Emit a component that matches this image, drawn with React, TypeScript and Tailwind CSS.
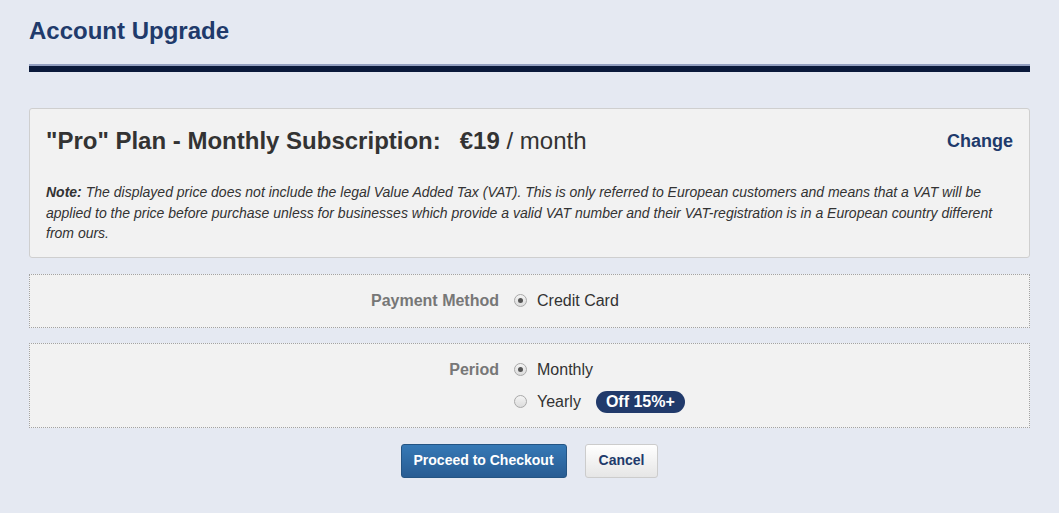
import { useState } from 'react';

const font = { fontFamily: '"Liberation Sans", Arial, sans-serif' };

function Radio({ checked, onClick }: { checked: boolean; onClick: () => void }) {
  return (
    <button
      type="button"
      onClick={onClick}
      className="flex h-[13px] w-[13px] items-center justify-center rounded-full border border-[#a9a9a9] bg-gradient-to-b from-[#f4f4f4] to-[#dcdcdc]"
    >
      {checked && <span className="h-[5px] w-[5px] rounded-full bg-[#555]" />}
    </button>
  );
}

export default function App() {
  const [period, setPeriod] = useState<'monthly' | 'yearly'>('monthly');

  return (
    <div className="min-h-[513px] bg-[#e5e9f2] px-[29px] pt-[17px]" style={font}>
      <h1 className="text-[24px] font-bold leading-[28px] text-[#203a6b]">Account Upgrade</h1>
      <div className="mt-[19px] h-[2px] bg-[#939fc0]" />
      <div className="h-[6px] bg-[#0b1a3b]" />

      <div className="mt-[36px] rounded-[3px] border border-[#cfcfcf] bg-[#f2f2f2] px-4 pb-[13px] pt-[17px]">
        <div className="flex items-center justify-between">
          <h2 className="text-[24px] leading-[30px] text-[#333]">
            <span className="font-bold">"Pro" Plan - Monthly Subscription:</span>
            <span className="ml-[19px] font-bold">€19</span> / month
          </h2>
          <a href="#" className="text-[18px] font-bold text-[#203a6b]">
            Change
          </a>
        </div>
        <p className="mt-[26px] text-[14px] italic leading-[20.5px] text-[#333]">
          <b className="mr-[4px]">Note:</b>The displayed price does not include the legal Value Added Tax (VAT). This is
          only referred to European customers and means that a VAT will be applied to the price before purchase unless
          for businesses which provide a valid VAT number and their VAT-registration is in a European country different
          from ours.
        </p>
      </div>

      <div className="mt-4 grid grid-cols-[469px_1fr] items-center gap-x-[15px] border border-dotted border-[#a3a3a3] bg-[#f2f2f2] py-[14px]">
        <div className="text-right text-[16px] font-bold text-[#777]">Payment Method</div>
        <label className="flex items-center gap-[10px] text-[16px] text-[#333]">
          <Radio checked onClick={() => {}} />
          Credit Card
        </label>
      </div>

      <div className="mt-[15px] grid grid-cols-[469px_1fr] gap-x-[15px] gap-y-[10px] border border-dotted border-[#a3a3a3] bg-[#f2f2f2] pb-[14px] pt-[15px]">
        <div className="text-right text-[16px] font-bold leading-[22px] text-[#777]">Period</div>
        <label className="flex items-center gap-[10px] text-[16px] leading-[22px] text-[#333]">
          <Radio checked={period === 'monthly'} onClick={() => setPeriod('monthly')} />
          Monthly
        </label>
        <div />
        <label className="flex items-center gap-[10px] text-[16px] leading-[22px] text-[#333]">
          <Radio checked={period === 'yearly'} onClick={() => setPeriod('yearly')} />
          Yearly
          <span className="ml-[5px] rounded-full bg-[#213a6b] px-[10px] text-[16px] font-bold leading-[22px] text-white">
            Off 15%+
          </span>
        </label>
      </div>

      <div className="mt-4 flex justify-center gap-[18px]">
        <button
          type="button"
          className="h-[34px] rounded-[3px] border border-[#245483] bg-gradient-to-b from-[#3679b6] to-[#285c93] px-[12px] text-[14px] font-bold text-white"
        >
          Proceed to Checkout
        </button>
        <button
          type="button"
          className="h-[34px] rounded-[3px] border border-[#ccc] bg-gradient-to-b from-white to-[#e6e6e6] px-[13px] text-[14px] font-bold text-[#213a6b]"
        >
          Cancel
        </button>
      </div>
    </div>
  );
}
